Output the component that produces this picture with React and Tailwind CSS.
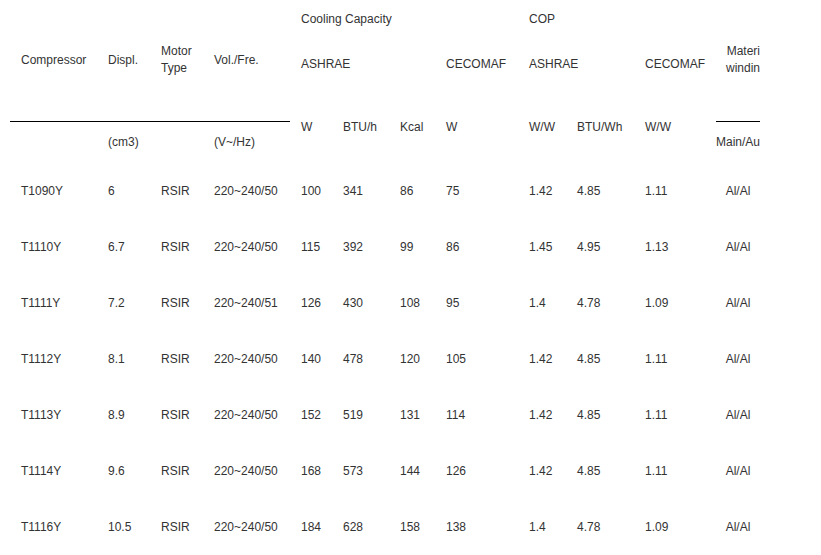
import React from "react";

const COLS =
  "grid grid-cols-[87px_53px_53px_87px_42px_57px_46px_83px_48px_68px_82px_44px]";

const rows = [
  ["T1090Y", "6", "RSIR", "220~240/50", "100", "341", "86", "75", "1.42", "4.85", "1.11", "Al/Al"],
  ["T1110Y", "6.7", "RSIR", "220~240/50", "115", "392", "99", "86", "1.45", "4.95", "1.13", "Al/Al"],
  ["T1111Y", "7.2", "RSIR", "220~240/51", "126", "430", "108", "95", "1.4", "4.78", "1.09", "Al/Al"],
  ["T1112Y", "8.1", "RSIR", "220~240/50", "140", "478", "120", "105", "1.42", "4.85", "1.11", "Al/Al"],
  ["T1113Y", "8.9", "RSIR", "220~240/50", "152", "519", "131", "114", "1.42", "4.85", "1.11", "Al/Al"],
  ["T1114Y", "9.6", "RSIR", "220~240/50", "168", "573", "144", "126", "1.42", "4.85", "1.11", "Al/Al"],
  ["T1116Y", "10.5", "RSIR", "220~240/50", "184", "628", "158", "138", "1.4", "4.78", "1.09", "Al/Al"],
];

function Line({ children, className = "" }) {
  return <div className={"whitespace-nowrap " + className}>{children}</div>;
}

export default function App() {
  return (
    <div
      className="w-[821px] h-[555px] overflow-hidden bg-white text-[#333] text-[12px] leading-[17px]"
      style={{ fontFamily: '"Liberation Sans", Arial, sans-serif' }}
    >
      <div className="ml-[10px] w-[750px] overflow-hidden">
        {/* Header */}
        <div className={COLS + " h-[163px]"}>
          {/* Compressor */}
          <div className="flex flex-col">
            <div className="h-[122px] border-b border-black pt-[52px] pl-[11px]">
              <Line>Compressor</Line>
            </div>
          </div>
          {/* Displ */}
          <div className="flex flex-col">
            <div className="h-[122px] border-b border-black pt-[52px] pl-[11px]">
              <Line>Displ.</Line>
            </div>
            <Line className="mt-[12px] pl-[11px]">(cm3)</Line>
          </div>
          {/* Motor Type */}
          <div className="flex flex-col">
            <div className="h-[122px] border-b border-black pt-[43px] pl-[11px]">
              <Line>Motor</Line>
              <Line>Type</Line>
            </div>
          </div>
          {/* Vol./Fre. */}
          <div className="flex flex-col">
            <div className="h-[122px] border-b border-black pt-[52px] pl-[11px]">
              <Line>Vol./Fre.</Line>
            </div>
            <Line className="mt-[12px] pl-[11px]">(V~/Hz)</Line>
          </div>
          {/* Cooling capacity */}
          <div className="flex flex-col pl-[11px] pt-[11px]">
            <Line>Cooling Capacity</Line>
            <Line className="mt-[28px]">ASHRAE</Line>
            <Line className="mt-[46px]">W</Line>
          </div>
          <div className="flex flex-col pl-[11px] pt-[119px]">
            <Line>BTU/h</Line>
          </div>
          <div className="flex flex-col pl-[11px] pt-[119px]">
            <Line>Kcal</Line>
          </div>
          <div className="flex flex-col pl-[11px] pt-[56px]">
            <Line>CECOMAF</Line>
            <Line className="mt-[46px]">W</Line>
          </div>
          {/* COP */}
          <div className="flex flex-col pl-[11px] pt-[11px]">
            <Line>COP</Line>
            <Line className="mt-[28px]">ASHRAE</Line>
            <Line className="mt-[46px]">W/W</Line>
          </div>
          <div className="flex flex-col pl-[11px] pt-[119px]">
            <Line>BTU/Wh</Line>
          </div>
          <div className="flex flex-col pl-[11px] pt-[56px]">
            <Line>CECOMAF</Line>
            <Line className="mt-[46px]">W/W</Line>
          </div>
          {/* Material of winding (clipped) */}
          <div className="flex flex-col overflow-hidden">
            <div className="h-[122px] border-b border-black pt-[43px] text-right">
              <Line>Materi</Line>
              <Line>windin</Line>
            </div>
            <Line className="mt-[12px] text-left">Main/Au</Line>
          </div>
        </div>

        {/* Body */}
        {rows.map((r) => (
          <div key={r[0]} className={COLS + " h-[56px] items-center"}>
            {r.slice(0, 11).map((c, i) => (
              <Line key={i} className="pl-[11px]">
                {c}
              </Line>
            ))}
            <Line className="text-center">{r[11]}</Line>
          </div>
        ))}
      </div>
    </div>
  );
}
